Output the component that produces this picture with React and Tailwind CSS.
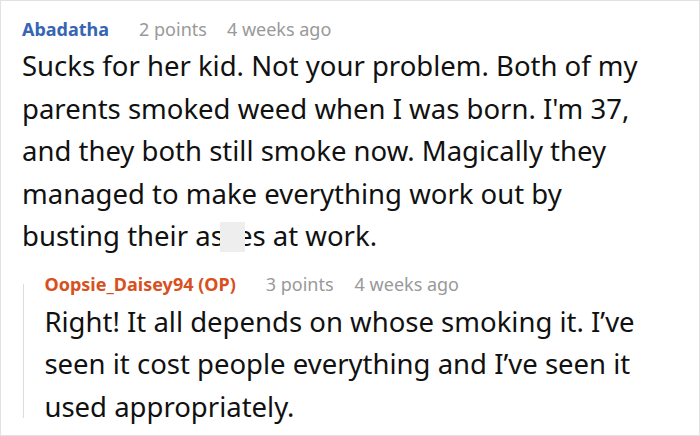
export default function App() {
  return (
    <div
      className="w-[700px] h-[436px] border border-[#e2e2e2] bg-white overflow-hidden"
      style={{ fontFamily: '"Noto Sans", "Open Sans", sans-serif' }}
    >
      <div className="pl-[21px] pr-[44px] pt-[16px]">
        {/* parent comment */}
        <div className="flex items-center text-[18px] leading-[24px]">
          <span className="font-bold text-[#3565b4]">Abadatha</span>
          <span className="ml-[30px] text-[#999]">2 points</span>
          <span className="ml-[20px] text-[#999]">4 weeks ago</span>
        </div>
        <p className="mt-[4px] text-[27.5px] leading-[42.5px] text-[#111]">
          Sucks for her kid. Not your problem. Both of my parents smoked weed when I was born. I'm 37, and they both still
          smoke now. Magically they managed to make everything work out by busting their{" "}
          <span className="relative">
            asses
            <span className="absolute left-[25px] top-[5px] w-[25px] h-[30px] bg-[#eeeeee]" />
          </span>{" "}
          at work.
        </p>

        {/* reply */}
        <div className="mt-[14px] flex">
          <div className="w-px bg-[#dcdcdc] mt-[12px] mb-[10px] ml-[1px]" />
          <div className="pl-[21px]">
            <div className="flex items-center text-[18px] leading-[24px]">
              <span className="font-bold text-[#d8501d]">Oopsie_Daisey94 (OP)</span>
              <span className="ml-[30px] text-[#999]">3 points</span>
              <span className="ml-[21px] text-[#999]">4 weeks ago</span>
            </div>
            <p className="mt-[5px] text-[27.5px] leading-[42.5px] text-[#111]">
              Right! It all depends on whose smoking it. I’ve seen it cost people everything and I’ve seen it used
              appropriately.
            </p>
          </div>
        </div>
      </div>
    </div>
  );
}
